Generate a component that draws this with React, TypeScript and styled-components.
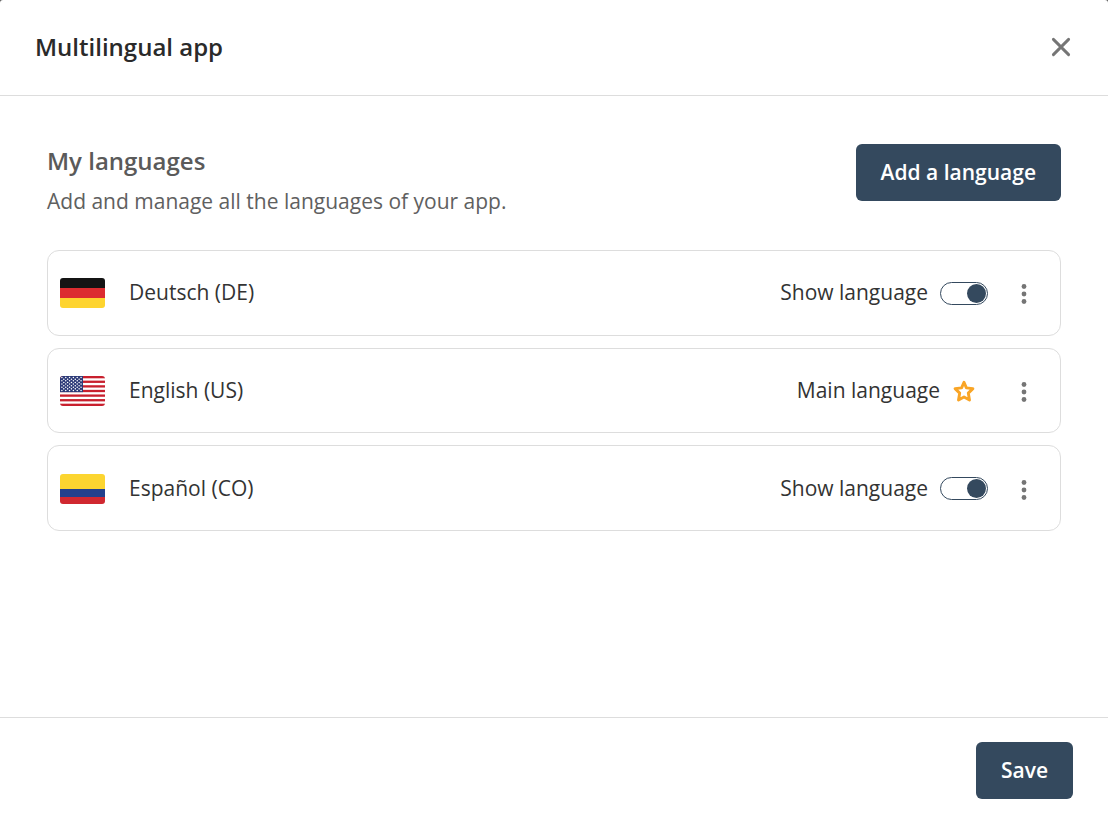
import React, { useState } from "react";
import styled, { createGlobalStyle } from "styled-components";

const GlobalStyle = createGlobalStyle`
  *, *::before, *::after { box-sizing: border-box; }
  body {
    margin: 0;
    background: #5c5c5c;
    color: #333;
    font-family: "Open Sans", "Noto Sans", sans-serif;
    font-size: 21px;
    line-height: 30px;
  }
  button { font: inherit; cursor: pointer; }
`;

const Dialog = styled.section`
  display: flex;
  flex-direction: column;
  min-height: 100vh;
  background: #fff;
  border-radius: 3px 3px 0 0;
`;

const Header = styled.header`
  display: flex;
  align-items: center;
  justify-content: space-between;
  height: 96px;
  padding: 0 35px 2px;
  border-bottom: 1px solid #ddd;
`;

const Title = styled.h1`
  margin: 0;
  color: #2a2a2a;
  font-size: 24px;
  font-weight: 600;
  line-height: 32px;
`;

const IconButton = styled.button`
  display: flex;
  align-items: center;
  justify-content: center;
  width: 24px;
  height: 36px;
  padding: 0;
  border: 0;
  background: none;
  color: #757575;
`;

const Content = styled.main`
  flex: 1;
  padding: 48px 47px;
`;

const Intro = styled.div`
  display: flex;
  align-items: flex-start;
  justify-content: space-between;
  margin-bottom: 34px;
`;

const Heading = styled.h2`
  margin: 0 0 8px;
  color: #5a5a5a;
  font-size: 24px;
  font-weight: 600;
  line-height: 34px;
`;

const Description = styled.p`
  margin: 0;
  color: #606060;
`;

const Button = styled.button`
  height: 57px;
  padding: 0 25px 2px;
  border: 0;
  border-radius: 6px;
  background: #34495e;
  color: #fff;
  font-weight: 600;
`;

const List = styled.ul`
  display: grid;
  grid-auto-rows: 1fr;
  gap: 12px;
  min-height: 281px;
  margin: 0;
  padding: 0;
  list-style: none;
`;

const Row = styled.li`
  display: flex;
  align-items: center;
  padding: 1px 24px 0 12px;
  border: 1px solid #ddd;
  border-radius: 12px;
`;

const FlagIcon = styled.svg`
  display: block;
  width: 45px;
  height: 30px;
  margin-right: 24px;
  border-radius: 3px;
`;

const RowText = styled.span<{ $grow?: boolean }>`
  flex: ${(p) => (p.$grow ? "1" : "none")};
  padding-bottom: 2px;
`;

const Status = styled.label`
  display: flex;
  align-items: center;
  gap: 12px;
  margin-right: 24px;
`;

const Switch = styled.input`
  appearance: none;
  display: flex;
  align-items: center;
  width: 48px;
  height: 23px;
  margin: 0;
  padding: 0 1px;
  border: 1px solid #34495e;
  border-radius: 12px;
  cursor: pointer;

  &::before {
    content: "";
    width: 19px;
    height: 19px;
    border-radius: 50%;
    background: #34495e;
  }
  &:checked { justify-content: flex-end; }
`;

const StarSlot = styled.span`
  display: flex;
  width: 36px;
`;

const Footer = styled.footer`
  display: flex;
  justify-content: flex-end;
  padding: 24px 35px 21px;
  border-top: 1px solid #ddd;
`;

type Country = "de" | "us" | "co";

const stripes: Record<"de" | "co", [string, number, number][]> = {
  de: [["#141414", 0, 10], ["#dc2c30", 10, 10], ["#fed42f", 20, 10]],
  co: [["#fcd530", 0, 15], ["#22408c", 15, 8], ["#d02830", 23, 7]],
};

function Flag({ country }: { country: Country }) {
  if (country === "us") {
    return (
      <FlagIcon viewBox="0 0 45 30" aria-hidden="true">
        <rect width="45" height="30" fill="#fff" />
        {Array.from({ length: 7 }, (_, i) => (
          <rect key={i} y={(i * 60) / 13} width="45" height={30 / 13} fill="#c8202e" />
        ))}
        <rect width="23" height="16.15" fill="#2c3a78" />
        {Array.from({ length: 9 }, (_, r) =>
          Array.from({ length: r % 2 ? 5 : 6 }, (_, c) => (
            <circle key={`${r}-${c}`} cx={(r % 2 ? 3.8 : 1.9) + c * 3.83} cy={1.6 + r * 1.61} r="0.76" fill="#fff" />
          )),
        )}
      </FlagIcon>
    );
  }
  return (
    <FlagIcon viewBox="0 0 45 30" aria-hidden="true">
      {stripes[country].map(([fill, y, height]) => (
        <rect key={fill} y={y} width="45" height={height} fill={fill} />
      ))}
    </FlagIcon>
  );
}

function Close() {
  return (
    <svg width="24" height="24" viewBox="0 0 24 24" fill="none" stroke="currentColor" strokeWidth="2.9" strokeLinecap="round" aria-hidden="true">
      <path d="M4.4 4.4 19.6 19.6M19.6 4.4 4.4 19.6" />
    </svg>
  );
}

function Dots() {
  return (
    <svg width="24" height="24" viewBox="0 0 24 24" fill="currentColor" aria-hidden="true">
      <circle cx="12" cy="5.5" r="2.4" />
      <circle cx="12" cy="13" r="2.4" />
      <circle cx="12" cy="20.5" r="2.4" />
    </svg>
  );
}

function Star() {
  return (
    <svg width="24" height="24" viewBox="0 0 24 24" fill="none" stroke="#f9a526" strokeWidth="2.9" strokeLinejoin="round" aria-hidden="true">
      <path d="M12 3.3 14.4 8.9 20.9 9.6 16.3 14.1 17.5 21 12 18 6.5 21 7.7 14.1 3.1 9.6 9.6 8.9Z" />
    </svg>
  );
}

const languages: { country: Country; name: string; main?: boolean }[] = [
  { country: "de", name: "Deutsch (DE)" },
  { country: "us", name: "English (US)", main: true },
  { country: "co", name: "Español (CO)" },
];

export default function App() {
  const [shown, setShown] = useState<Record<string, boolean>>({ de: true, co: true });

  return (
    <>
      <GlobalStyle />
      <Dialog role="dialog" aria-labelledby="dialog-title">
        <Header>
          <Title id="dialog-title">Multilingual app</Title>
          <IconButton type="button" aria-label="Close"><Close /></IconButton>
        </Header>
        <Content>
          <Intro>
            <div>
              <Heading>My languages</Heading>
              <Description>Add and manage all the languages of your app.</Description>
            </div>
            <Button type="button">Add a language</Button>
          </Intro>
          <List>
            {languages.map(({ country, name, main }) => (
              <Row key={country}>
                <Flag country={country} />
                <RowText $grow>{name}</RowText>
                {main ? (
                  <Status as="span">
                    <RowText>Main language</RowText>
                    <StarSlot><Star /></StarSlot>
                  </Status>
                ) : (
                  <Status>
                    <RowText>Show language</RowText>
                    <Switch
                      type="checkbox"
                      role="switch"
                      checked={shown[country]}
                      onChange={(e) => setShown({ ...shown, [country]: e.target.checked })}
                    />
                  </Status>
                )}
                <IconButton type="button" aria-label={`Options for ${name}`}><Dots /></IconButton>
              </Row>
            ))}
          </List>
        </Content>
        <Footer>
          <Button type="button">Save</Button>
        </Footer>
      </Dialog>
    </>
  );
}
